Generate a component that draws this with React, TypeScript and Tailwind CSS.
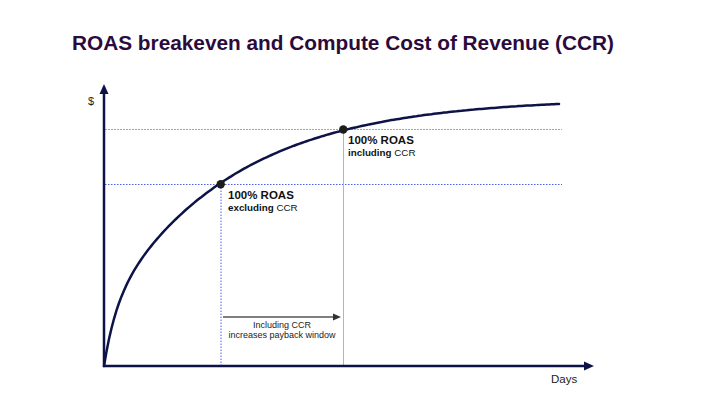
import { useMemo } from 'react'

const NAVY = '#0e1347'

// revenue curve: two stacked exponentials, fitted to the picture
function curvePath() {
  const pts: string[] = []
  for (let d = 0; d <= 455; d += 2.5) {
    const rise = 55 * (1 - Math.exp(-d / 12)) + 213 * (1 - Math.exp(-d / 127))
    pts.push(`${(104 + d).toFixed(1)},${(366 - rise).toFixed(1)}`)
  }
  return 'M' + pts.join(' L')
}

function Chart() {
  const d = useMemo(curvePath, [])

  return (
    <div className="relative h-[349px] w-[720px]">
      <svg
        className="absolute inset-0"
        width={720}
        height={349}
        viewBox="0 56 720 349"
      >
        {/* guide lines */}
        <line x1={105} y1={129.5} x2={562} y2={129.5} stroke="#f2857e" strokeWidth={1} strokeDasharray="2 1" />
        <line x1={105} y1={184.5} x2={562} y2={184.5} stroke="#4c5fe8" strokeWidth={1} strokeDasharray="1.5 1.5" />
        <line x1={221} y1={184.5} x2={221} y2={365} stroke="#4c5fe8" strokeWidth={1} strokeDasharray="1.5 1.5" />
        <line x1={343.5} y1={130} x2={343.5} y2={365} stroke="#f19c95" strokeWidth={1} />

        {/* payback arrow */}
        <line x1={223} y1={317} x2={335} y2={317} stroke="#555" strokeWidth={1.5} />
        <path d="M341,317 L333,313.5 L333,320.5 Z" fill="#333" />

        {/* axes */}
        <line x1={104} y1={367} x2={104} y2={92} stroke={NAVY} strokeWidth={2.5} />
        <path d="M104,84 L99.5,94 L108.5,94 Z" fill={NAVY} />
        <line x1={103} y1={366} x2={585} y2={366} stroke={NAVY} strokeWidth={2.5} />
        <path d="M594,366 L584,361.5 L584,370.5 Z" fill={NAVY} />

        <path d={d} fill="none" stroke={NAVY} strokeWidth={2.5} strokeLinecap="round" />

        <circle cx={220.7} cy={184.3} r={4.2} fill="#1c1c1c" />
        <circle cx={343.3} cy={129.5} r={4.2} fill="#1c1c1c" />
      </svg>

      <span className="absolute left-[88px] top-[39px] text-[11px] leading-[13px] text-[#222]">$</span>

      <div className="absolute left-[228px] top-[133px] text-[#111]">
        <p className="text-[11.5px] font-bold leading-[13px]">100% ROAS</p>
        <p className="text-[9.8px] leading-[12px]">
          <span className="font-bold">excluding</span> CCR
        </p>
      </div>

      <div className="absolute left-[348px] top-[78px] text-[#111]">
        <p className="text-[11.5px] font-bold leading-[13px]">100% ROAS</p>
        <p className="text-[9.8px] leading-[12px]">
          <span className="font-bold">including</span> CCR
        </p>
      </div>

      <div className="absolute left-[222px] top-[264px] w-[120px] text-center text-[9px] leading-[10px] text-[#222]">
        <p>Including CCR</p>
        <p>increases payback window</p>
      </div>

      <span className="absolute left-[551px] top-[317px] text-[11.5px] leading-[13px] text-[#222]">Days</span>
    </div>
  )
}

export default function App() {
  return (
    <div className="flex h-[405px] w-[720px] flex-col overflow-hidden bg-white font-['Liberation_Sans',Arial,sans-serif]">
      <h1 className="pl-[72px] pt-[30px] text-[20.8px] font-bold leading-[26px] text-[#2b0b3c]">
        ROAS breakeven and Compute Cost of Revenue (CCR)
      </h1>
      <Chart />
    </div>
  )
}
